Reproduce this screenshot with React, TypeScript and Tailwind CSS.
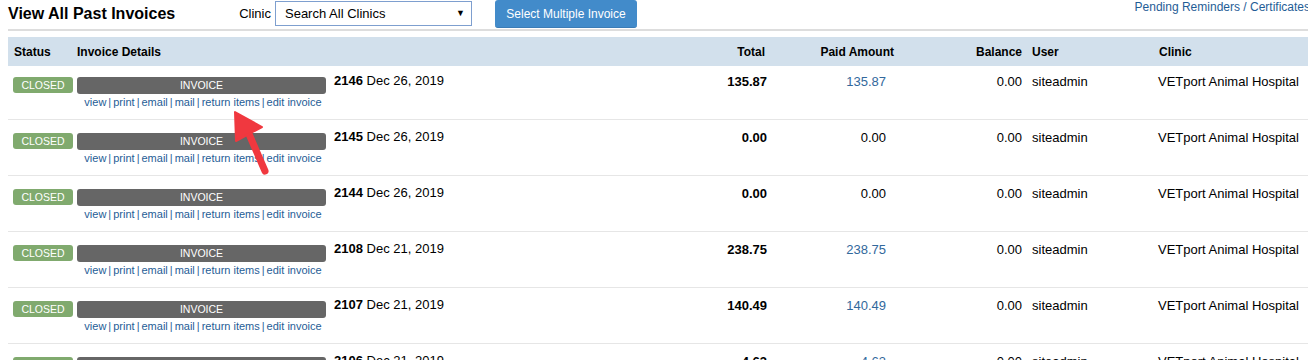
import React from "react";

const rows = [
  { no: "2146", date: "Dec 26, 2019", total: "135.87", paid: "135.87", link: true },
  { no: "2145", date: "Dec 26, 2019", total: "0.00", paid: "0.00", link: false },
  { no: "2144", date: "Dec 26, 2019", total: "0.00", paid: "0.00", link: false },
  { no: "2108", date: "Dec 21, 2019", total: "238.75", paid: "238.75", link: true },
  { no: "2107", date: "Dec 21, 2019", total: "140.49", paid: "140.49", link: true },
  { no: "2106", date: "Dec 21, 2019", total: "4.63", paid: "4.63", link: true },
];

const links = ["view", "print", "email", "mail", "return items", "edit invoice"];

function Row({ r, first }: { r: (typeof rows)[number]; first: boolean }) {
  const tp = first ? "pt-[8px]" : "pt-[10px]";
  return (
    <div
      className={
        "grid grid-cols-[69px_623px_70px_124px_130px_121px_1fr] " +
        (first ? "h-[53px]" : "h-[56px] border-t border-[#e6e6e6]")
      }
    >
      <div className={"pl-[5px] " + (first ? "pt-[11px]" : "pt-[13px]")}>
        <div className="w-[60px] h-[16px] rounded-[3px] bg-[#80aa6e] text-white text-[10.5px] leading-[16px] text-center">
          CLOSED
        </div>
      </div>
      <div className={"flex " + (first ? "pt-[11px]" : "pt-[13px]")}>
        <div className="w-[249px] flex flex-col items-center">
          <div className="w-full h-[17px] rounded-[3px] bg-[#666666] text-white text-[10.5px] leading-[17px] text-center">
            INVOICE
          </div>
          <div className="mt-[2px] flex items-center text-[11px] leading-[13px] text-[#1f5d96] whitespace-nowrap pl-[3px]">
            {links.map((l, i) => (
              <React.Fragment key={l}>
                {i > 0 && <span className="mx-[2px] text-[#2b5f9a]">|</span>}
                <span>{l}</span>
              </React.Fragment>
            ))}
          </div>
        </div>
        <div className="ml-[8px] -mt-[4px] text-[13px] leading-[16px] text-black whitespace-nowrap">
          <span className="font-bold">{r.no}</span> {r.date}
        </div>
      </div>
      <div className={"text-right pr-[3px] text-[13px] leading-[16px] font-bold text-black " + tp}>
        {r.total}
      </div>
      <div
        className={
          "text-right pr-[8px] text-[13px] leading-[16px] " +
          (r.link ? "text-[#32689c] " : "text-black ") +
          tp
        }
      >
        {r.paid}
      </div>
      <div className={"text-right pr-[2px] text-[13px] leading-[16px] text-black " + tp}>
        0.00
      </div>
      <div className={"pl-[8px] text-[13px] leading-[16px] text-black " + tp}>
        siteadmin
      </div>
      <div className={"pl-[13px] text-[13px] leading-[16px] text-black whitespace-nowrap " + tp}>
        VETport Animal Hospital
      </div>
    </div>
  );
}

export default function App() {
  return (
    <div
      className="relative w-[1308px] h-[360px] overflow-hidden bg-white text-black"
      style={{ fontFamily: '"Liberation Sans", Arial, sans-serif' }}
    >
      <div className="flex items-start h-[29px]">
        <div className="pl-[8px] pt-[4px] text-[16px] leading-[20px] font-bold whitespace-nowrap">
          View All Past Invoices
        </div>
        <div className="ml-[64px] pt-[6px] text-[13px] leading-[16px]">Clinic</div>
        <div className="ml-[4px] mt-[1px] w-[197px] h-[25px] border border-[#7e9fcf] bg-white flex items-center justify-between pl-[9px] pr-[6px] text-[13px]">
          <span>Search All Clinics</span>
          <span className="text-[9px]">▼</span>
        </div>
        <div className="ml-[23px] w-[142px] h-[28px] rounded-[3px] bg-[#428bca] text-white text-[12px] flex items-center justify-center whitespace-nowrap border-b border-[#3b7cb6]">
          Select Multiple Invoice
        </div>
        <div className="ml-auto mr-[-2px] text-[12px] leading-[14px] text-[#1f5d96] whitespace-nowrap">
          Pending Reminders / Certificates
        </div>
      </div>
      <div className="ml-[8px] h-[2px] bg-[#dddddd]" />
      <div className="pl-[8px] mt-[6px]">
        <div className="grid grid-cols-[69px_623px_70px_124px_130px_121px_1fr] h-[29px] items-center bg-[#d2e0ec] text-[12px] font-bold">
          <div className="pl-[6px]">Status</div>
          <div>Invoice Details</div>
          <div className="text-right pr-[5px]">Total</div>
          <div className="text-right">Paid Amount</div>
          <div className="text-right pr-[2px]">Balance</div>
          <div className="pl-[8px]">User</div>
          <div className="pl-[14px]">Clinic</div>
        </div>
        {rows.map((r, i) => (
          <Row key={r.no} r={r} first={i === 0} />
        ))}
      </div>
      <svg className="absolute left-0 top-0 pointer-events-none" width="1308" height="360">
        <line x1="249" y1="134" x2="265" y2="171" stroke="#f0383f" strokeWidth="7" strokeLinecap="round" />
        <polygon points="235,112 236,141 262,127" fill="#f0383f" stroke="#f0383f" strokeWidth="2" strokeLinejoin="round" />
      </svg>
    </div>
  );
}
